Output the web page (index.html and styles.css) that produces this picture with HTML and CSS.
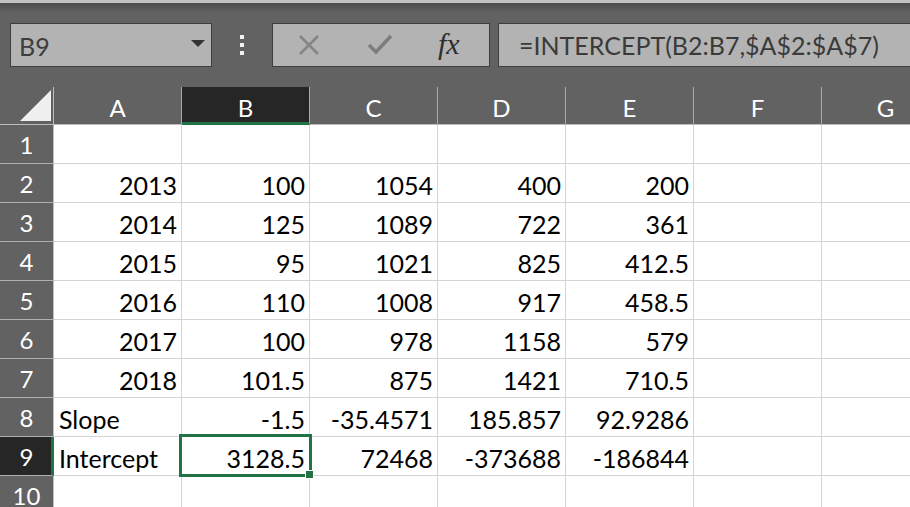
FILE: index.html
```html
<!DOCTYPE html>
<html>
<head>
<meta charset="utf-8">
<link rel="stylesheet" href="styles.css">
</head>
<body>
<div class="app">
  <div class="toolbar">
    <div class="namebox"><span>B9</span><span class="caret"></span></div>
    <div class="dots"><i></i><i></i><i></i></div>
    <div class="fbtns">
      <svg class="ico-x" width="22" height="20" viewBox="0 0 22 20"><path d="M2 1 L20 19 M20 1 L2 19" stroke="#858585" stroke-width="2.6" fill="none"/></svg>
      <svg class="ico-check" width="26" height="22" viewBox="0 0 26 22"><path d="M2 12 L9 19 L24 3" stroke="#7c7c7c" stroke-width="3.4" fill="none"/></svg>
      <span class="fx">fx</span>
    </div>
    <div class="formula">=INTERCEPT(B2:B7,$A$2:$A$7)</div>
  </div>
  <div class="sheet">
    <div class="h corner"><svg width="31" height="31" viewBox="0 0 31 31"><polygon points="31,0 31,31 0,31" fill="#f0f0f0"/></svg></div>
    <div class="h">A</div><div class="h act">B</div><div class="h">C</div><div class="h">D</div><div class="h">E</div><div class="h">F</div><div class="h">G</div>

    <div class="r">1</div><div class="c"></div><div class="c"></div><div class="c"></div><div class="c"></div><div class="c"></div><div class="c"></div><div class="c"></div>

    <div class="r">2</div><div class="c n">2013</div><div class="c n">100</div><div class="c n">1054</div><div class="c n">400</div><div class="c n">200</div><div class="c"></div><div class="c"></div>
    <div class="r">3</div><div class="c n">2014</div><div class="c n">125</div><div class="c n">1089</div><div class="c n">722</div><div class="c n">361</div><div class="c"></div><div class="c"></div>
    <div class="r">4</div><div class="c n">2015</div><div class="c n">95</div><div class="c n">1021</div><div class="c n">825</div><div class="c n">412.5</div><div class="c"></div><div class="c"></div>
    <div class="r">5</div><div class="c n">2016</div><div class="c n">110</div><div class="c n">1008</div><div class="c n">917</div><div class="c n">458.5</div><div class="c"></div><div class="c"></div>
    <div class="r">6</div><div class="c n">2017</div><div class="c n">100</div><div class="c n">978</div><div class="c n">1158</div><div class="c n">579</div><div class="c"></div><div class="c"></div>
    <div class="r">7</div><div class="c n">2018</div><div class="c n">101.5</div><div class="c n">875</div><div class="c n">1421</div><div class="c n">710.5</div><div class="c"></div><div class="c"></div>
    <div class="r">8</div><div class="c">Slope</div><div class="c n">-1.5</div><div class="c n">-35.4571</div><div class="c n">185.857</div><div class="c n">92.9286</div><div class="c"></div><div class="c"></div>
    <div class="r act">9</div><div class="c">Intercept</div><div class="c n sel">3128.5<span class="selbox"><span class="handle"></span></span></div><div class="c n">72468</div><div class="c n">-373688</div><div class="c n">-186844</div><div class="c"></div><div class="c"></div>
    <div class="r">10</div><div class="c"></div><div class="c"></div><div class="c"></div><div class="c"></div><div class="c"></div><div class="c"></div><div class="c"></div>
  </div>
</div>
</body>
</html>
```
FILE: styles.css
```css
html, body {
  margin: 0;
  padding: 0;
  width: 910px;
  height: 507px;
  overflow: hidden;
  background: #626262;
  font-family: Lato, "Open Sans", sans-serif;
}

.app {
  display: flex;
  flex-direction: column;
  width: 910px;
  height: 507px;
}

.toolbar {
  box-sizing: border-box;
  height: 87px;
  border-top: 3px solid #c2c2c2;
  background: linear-gradient(#4c4c4c, #626262 9px);
  display: flex;
  align-items: flex-start;
  padding-top: 20px;
  flex: none;
}

.toolbar > * { flex: none; }

.namebox {
  box-sizing: border-box;
  margin-left: 10px;
  width: 202px;
  height: 44px;
  border: 1px solid #3e3e3e;
  background: #b3b3b3;
  display: flex;
  align-items: center;
  justify-content: space-between;
  padding: 1px 6px 0 8px;
  font-size: 25px;
  color: #3d3d3d;
}

.caret {
  width: 0;
  height: 0;
  border-left: 7px solid transparent;
  border-right: 7px solid transparent;
  border-top: 7px solid #333;
  margin-top: -4px;
}

.dots {
  width: 60px;
  height: 44px;
  display: flex;
  flex-direction: column;
  align-items: center;
  justify-content: center;
  gap: 4px;
}

.dots i {
  display: block;
  width: 4px;
  height: 4px;
  background: #f2f2f2;
}

.fbtns {
  box-sizing: border-box;
  width: 218px;
  height: 44px;
  border: 1px solid #3e3e3e;
  background: #b3b3b3;
  display: flex;
  align-items: center;
  padding-left: 25px;
}

.ico-x { margin-top: -1px; }
.ico-check { margin-left: 47px; margin-top: -2px; }

.fx {
  margin-left: 45px;
  font-family: "Liberation Serif", serif;
  font-style: italic;
  font-size: 30px;
  color: #2e2e2e;
  margin-top: -3px;
}

.formula {
  box-sizing: border-box;
  margin-left: 8px;
  width: 430px;
  height: 44px;
  border: 1px solid #3e3e3e;
  background: #b3b3b3;
  display: flex;
  align-items: center;
  padding: 0 0 0 20px;
  font-size: 25px;
  color: #3a3a3a;
  white-space: nowrap;
}

.sheet {
  display: grid;
  grid-template-columns: 54px repeat(7, 128px);
  grid-template-rows: 38px;
  grid-auto-rows: 39px;
  background: #fff;
  flex: 1;
  overflow: hidden;
  font-size: 25px;
  color: #000;
}

.c {
  box-sizing: border-box;
  border-right: 1px solid #d4d4d4;
  border-bottom: 1px solid #d4d4d4;
  display: flex;
  align-items: center;
  padding: 3px 4px 0 5px;
  white-space: nowrap;
}

.c.n { justify-content: flex-end; }

.h {
  box-sizing: border-box;
  background: #626262;
  color: #fff;
  border-right: 1px solid #a9a9a9;
  border-bottom: 1px solid #bdbdbd;
  display: flex;
  align-items: center;
  justify-content: center;
  padding-top: 3px;
  font-size: 24px;
}

.h.corner {
  align-items: flex-start;
  justify-content: flex-start;
  padding: 3px 0 0 20px;
  border-right-color: #bdbdbd;
}

.h.act {
  background: #262626;
  border-bottom: 3px solid #217346;
  padding-top: 5px;
}

.r {
  box-sizing: border-box;
  background: #626262;
  color: #fff;
  border-right: 1px solid #bdbdbd;
  border-bottom: 1px solid #b0b0b0;
  display: flex;
  align-items: center;
  justify-content: center;
  padding-top: 1px;
  font-size: 24px;
}

.r.act {
  background: #262626;
  border-right: 3px solid #217346;
  padding-left: 2px;
}

.sel { position: relative; }

.selbox {
  position: absolute;
  box-sizing: border-box;
  left: -3px;
  top: -3px;
  width: 133px;
  height: 43px;
  border: 3px solid #217346;
  pointer-events: none;
}

.handle {
  position: absolute;
  box-sizing: border-box;
  right: -5px;
  bottom: -5px;
  width: 9px;
  height: 9px;
  background: #217346;
  border: 1px solid #fff;
}
```
